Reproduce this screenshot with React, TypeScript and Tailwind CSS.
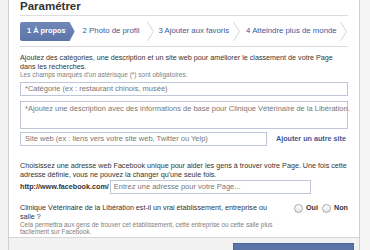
import React from "react";

const font = { fontFamily: '"Liberation Sans", Arial, sans-serif' };

function Chevron() {
  return (
    <svg width="7" height="19" viewBox="0 0 7 19" className="shrink-0">
      <polyline points="0.5,0 6.5,9.5 0.5,19" fill="none" stroke="#d3d6db" strokeWidth="1" />
    </svg>
  );
}

function Radio({ label }: { label: string }) {
  return (
    <label className="flex items-center gap-[3px]">
      <span className="h-[9px] w-[9px] rounded-full border border-[#a8a8a8] bg-gradient-to-b from-white to-[#e6e6e6]" />
      <span className="font-bold text-[#333]">{label}</span>
    </label>
  );
}

export default function App() {
  return (
    <div
      className="flex h-[250px] w-[370px] overflow-hidden whitespace-nowrap bg-[#f2f2f2] text-[7.2px] leading-[8.5px] text-[#333]"
      style={font}
    >
      <div className="w-[8px] shrink-0" />
      <div className="flex w-[352px] shrink-0 flex-col border-x border-[#cfcfcf] bg-white">
        <div className="flex-1 px-[11px]">
          <div className="-mt-[1px] border-b border-[#dcdcdc] pb-[2px] text-[11.5px] font-bold leading-[14px] text-[#333]">
            Paramétrer
          </div>

          <div className="mt-[6px] flex h-[19px] items-stretch text-[7.8px]">
            <div className="flex shrink-0 items-center rounded-l-[2px] bg-gradient-to-b from-[#6f87b8] to-[#5c75a9] pl-[7px] pr-[9px] text-[7.4px] font-bold text-white [clip-path:polygon(0_0,calc(100%-5px)_0,100%_50%,calc(100%-5px)_100%,0_100%)]">
              1 À propos
            </div>
            <div className="flex shrink-0 items-center pl-[8px] pr-[8px] text-[#3b5998]">2 Photo de profil</div>
            <Chevron />
            <div className="flex shrink-0 items-center pl-[4px] pr-[4px] text-[#3b5998]">3 Ajouter aux favoris</div>
            <Chevron />
            <div className="flex shrink-0 items-center pl-[6px] pr-[3px] text-[#3b5998]">4 Atteindre plus de monde</div>
            <Chevron />
          </div>
          <div className="mt-[5px] border-b border-[#dcdcdc]" />

          <p className="mt-[7px]">
            Ajoutez des catégories, une description et un site web pour améliorer le classement de votre Page
            <br />
            dans les recherches.
          </p>
          <p className="text-[6.5px] leading-[7px] text-[#808080]">
            Les champs marqués d'un astérisque (*) sont obligatoires.
          </p>

          <div className="mt-[4px] flex h-[14px] items-center border border-[#bdc7d8] px-[4px] text-[7.5px] text-[#777]">
            *Catégorie (ex : restaurant chinois, musée)
          </div>
          <div className="mt-[5px] h-[28px] border border-[#bdc7d8] px-[4px] pt-[3px] text-[7.5px] text-[#777]">
            *Ajoutez une description avec des informations de base pour Clinique Vétérinaire de la Libération.
          </div>

          <div className="mt-[3px] flex items-center gap-[9px]">
            <div className="flex h-[14px] w-[247px] items-center border border-[#bdc7d8] px-[4px] text-[7.5px] text-[#777]">
              Site web (ex : liens vers votre site web, Twitter ou Yelp)
            </div>
            <a className="font-bold text-[#3b5998]">Ajouter un autre site</a>
          </div>

          <p className="mt-[16px]">
            Choisissez une adresse web Facebook unique pour aider les gens à trouver votre Page. Une fois cette
            <br />
            adresse définie, vous ne pouvez la changer qu'une seule fois.
          </p>
          <div className="mt-[1px] flex items-center gap-[1px]">
            <span className="font-bold">http://www.facebook.com/</span>
            <div className="flex h-[14px] w-[201px] items-center border border-[#bdc7d8] px-[3px] text-[7.5px] text-[#777]">
              Entrez une adresse pour votre Page...
            </div>
          </div>

          <div className="mt-[10px] flex items-start">
            <div className="w-[275px]">
              <p>
                Clinique Vétérinaire de la Libération est-il un vrai établissement, entreprise ou
                <br />
                salle ?
              </p>
              <p className="text-[6.4px] leading-[7px] text-[#808080]">
                Cela permettra aux gens de trouver cet établissement, cette entreprise ou cette salle plus
                <br />
                facilement sur Facebook.
              </p>
            </div>
            <div className="ml-auto flex items-center gap-[4px]">
              <Radio label="Oui" />
              <Radio label="Non" />
            </div>
          </div>
        </div>

        <div className="flex h-[13px] shrink-0 items-start justify-end border-t border-[#d6d6d6] bg-[#f2f2f2] pr-[5px] pt-[5px]">
          <div className="h-[12px] w-[121px] border border-[#4a64a0] bg-[#5b74a8]" />
        </div>
      </div>
      <div className="flex-1 bg-[#f5f5f5]" />
    </div>
  );
}
